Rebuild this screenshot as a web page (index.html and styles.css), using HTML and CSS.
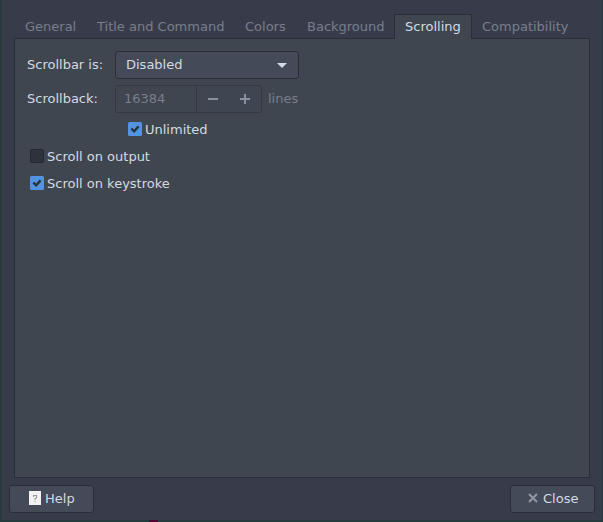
FILE: index.html
```html
<!DOCTYPE html>
<html lang="en">
<head>
<meta charset="utf-8">
<title>Preferences</title>
<link rel="stylesheet" href="styles.css">
</head>
<body>
<main class="window">
  <nav class="tabs">
    <span class="tab general">General</span>
    <span class="tab title">Title and Command</span>
    <span class="tab colors">Colors</span>
    <span class="tab background">Background</span>
    <span class="tab active">Scrolling</span>
    <span class="tab compat">Compatibility</span>
  </nav>
  <section class="panel">
    <div class="row">
      <span class="label">Scrollbar is:</span>
      <div class="select"><span>Disabled</span>
        <svg width="10" height="5" viewBox="0 0 10 5"><path d="M0 0h10L5 5z" fill="#d3dae3"/></svg>
      </div>
    </div>
    <div class="row">
      <span class="label">Scrollback:</span>
      <div class="spin">
        <span class="value">16384</span>
        <span class="steps">
          <svg width="10" height="10" viewBox="0 0 10 10"><path d="M0 4h10v2H0z" fill="#8a909d"/></svg>
          <svg width="10" height="10" viewBox="0 0 10 10"><path d="M0 4h4V0h2v4h4v2H6v4H4V6H0z" fill="#8a909d"/></svg>
        </span>
      </div>
      <span class="unit">lines</span>
    </div>
    <div class="check nested">
      <svg class="box" width="14" height="14" viewBox="0 0 14 14"><rect width="14" height="14" rx="1.5" fill="#5294e2"/><path d="M3.3 6.5 6.1 9.3 10.6 4.4" fill="none" stroke="#2b303b" stroke-width="2.3"/></svg>
      <span>Unlimited</span>
    </div>
    <div class="check">
      <svg class="box" width="14" height="14" viewBox="0 0 14 14"><rect x=".5" y=".5" width="13" height="13" rx="1.5" fill="#2e323d" stroke="#262933"/></svg>
      <span>Scroll on output</span>
    </div>
    <div class="check">
      <svg class="box" width="14" height="14" viewBox="0 0 14 14"><rect width="14" height="14" rx="1.5" fill="#5294e2"/><path d="M3.3 6.5 6.1 9.3 10.6 4.4" fill="none" stroke="#2b303b" stroke-width="2.3"/></svg>
      <span>Scroll on keystroke</span>
    </div>
  </section>
  <footer class="actions">
    <div class="button help">
      <svg width="12" height="14" viewBox="0 0 12 14"><path d="M0 0h12v14H0z" fill="#f2f2f2"/><path d="M4.5 6V4.5h3v2.2L6 7.7V9M5.4 10.5h1.2" fill="none" stroke="#999" stroke-width="1.1"/></svg>
      <span>Help</span>
    </div>
    <div class="button close">
      <svg width="10" height="10" viewBox="0 0 10 10"><path d="M1 1l8 8M9 1 1 9" stroke="#9298a3" stroke-width="2"/></svg>
      <span>Close</span>
    </div>
  </footer>
</main>
<div class="desktop-mark"></div>
</body>
</html>
```
FILE: styles.css
```css
* { box-sizing: border-box; }
body {
  margin: 0;
  height: 522px;
  overflow: hidden;
  background: #263b3e;
  font: 13px/18px "DejaVu Sans", sans-serif;
  color: #d3dae3;
}
svg { display: block; flex: none; }
span { white-space: nowrap; }
.window {
  width: 600px;
  height: 520px;
  margin-left: 2px;
  padding: 14px 12px 0;
  background: #383c4a;
}
.tabs {
  display: flex;
  height: 25px;
  position: relative;
}
.tab {
  height: 24px;
  padding: 4px 0 0 11px;
  color: #787e8a;
}
.general { width: 72px; }
.title { width: 148px; }
.colors { width: 62px; }
.background { width: 98px; }
.tab.active {
  width: 78px;
  height: 25px;
  padding: 3px 0 0 10px;
  background: #404650;
  border: 1px solid #2b2e39;
  border-bottom: 0;
  color: #d3dae3;
}
.compat { padding-left: 10px; }
.panel {
  height: 440px;
  margin-top: -1px;
  padding: 12px;
  background: #404650;
  border: 1px solid #2b2e39;
}
.row {
  display: flex;
  align-items: center;
  height: 28px;
  margin-bottom: 6px;
}
.label { width: 88px; }
.select {
  display: flex;
  align-items: center;
  justify-content: space-between;
  width: 184px;
  height: 28px;
  padding: 0 11px 0 10px;
  background: #444a58;
  border: 1px solid #2b2e39;
  border-radius: 3px;
}
.spin {
  display: flex;
  width: 147px;
  height: 28px;
  background: #404552;
  border: 1px solid #353945;
  border-radius: 3px;
  color: #787e8a;
}
.value {
  width: 81px;
  padding: 4px 0 0 8px;
  background: #404650;
  border-right: 1px solid #353945;
}
.steps {
  display: flex;
  align-items: center;
  gap: 22px;
  padding-left: 11px;
}
.unit { margin-left: 6px; color: #787e8a; }
.check {
  display: flex;
  align-items: center;
  gap: 3px;
  height: 18px;
  margin: 0 0 9px 3px;
}
.check span { padding-top: 2px; }
.check.nested { margin: 7px 0 9px 101px; }
.actions {
  display: flex;
  justify-content: space-between;
  margin: 7px -5px 0;
}
.button {
  display: flex;
  align-items: center;
  width: 85px;
  height: 28px;
  background: #444a58;
  border: 1px solid #2b2e39;
  border-radius: 3px;
}
.button svg { margin-bottom: 2px; }
.help { padding-left: 19px; gap: 4px; }
.close { padding-left: 17px; gap: 5px; }
.desktop-mark {
  width: 9px;
  height: 2px;
  margin-left: 149px;
  background: #4b0832;
}
```
